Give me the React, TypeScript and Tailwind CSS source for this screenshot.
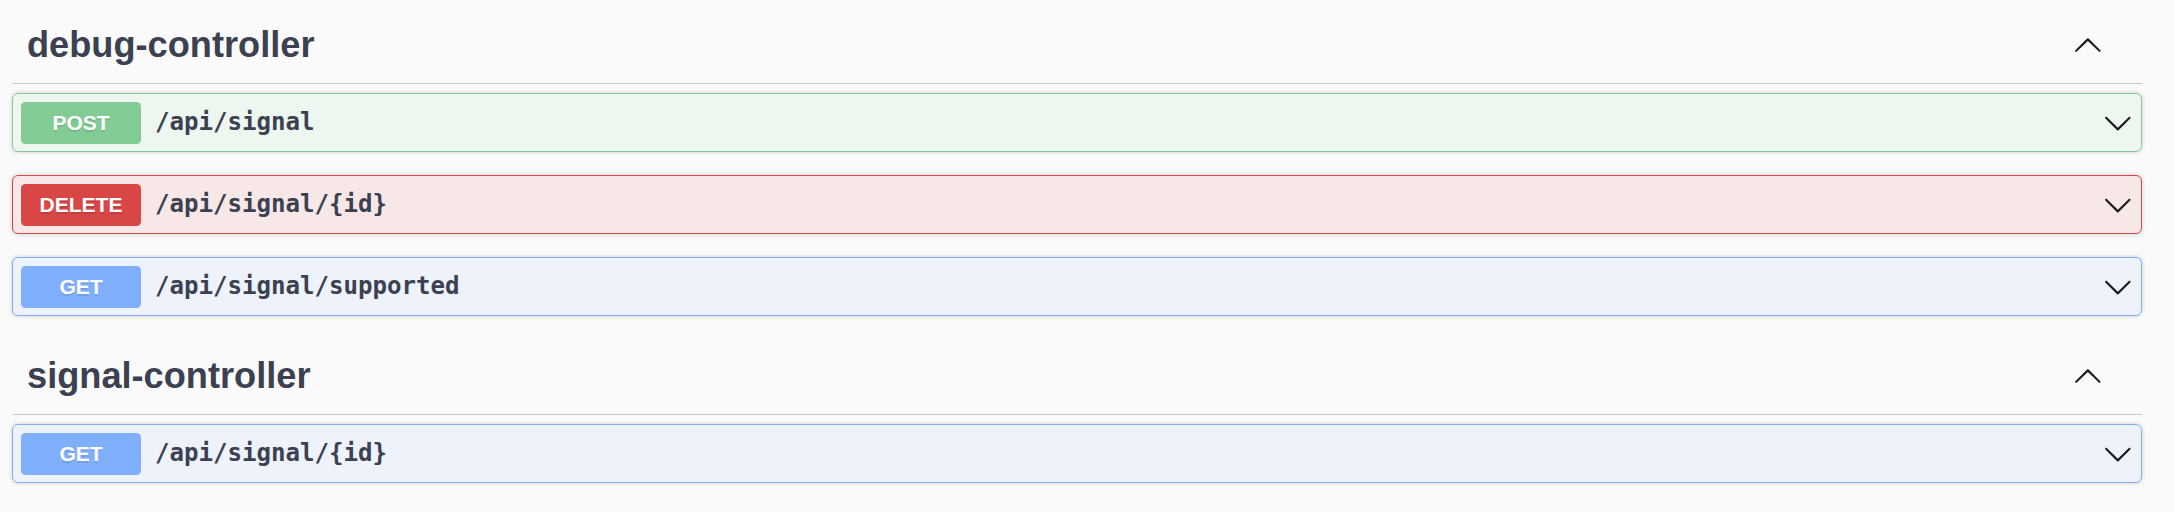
import React from 'react';

type Method = 'POST' | 'DELETE' | 'GET';

interface Operation {
  method: Method;
  path: string;
}

interface TagSection {
  name: string;
  ops: Operation[];
}

const sections: TagSection[] = [
  {
    name: 'debug-controller',
    ops: [
      { method: 'POST', path: '/api/signal' },
      { method: 'DELETE', path: '/api/signal/{id}' },
      { method: 'GET', path: '/api/signal/supported' },
    ],
  },
  {
    name: 'signal-controller',
    ops: [{ method: 'GET', path: '/api/signal/{id}' }],
  },
];

// block + badge colours per http method
const methodStyles: Record<Method, { block: string; badge: string }> = {
  POST: {
    block: 'bg-[#edf6ef] border-[#83cb94]',
    badge: 'bg-[#83cb94]',
  },
  DELETE: {
    block: 'bg-[#f7e8e7] border-[#d84646]',
    badge: 'bg-[#d84646]',
  },
  GET: {
    block: 'bg-[#edf2fb] border-[#80b0fd]',
    badge: 'bg-[#80b0fd]',
  },
};

const Arrow: React.FC<{ up?: boolean }> = ({ up }) => (
  <svg
    viewBox="0 0 20 20"
    className={`w-[29.7px] h-[29.7px] shrink-0 fill-[#1b1b1b] ${up ? 'rotate-180' : ''}`}
    aria-hidden="true"
  >
    <path d="M17.418 6.109c.272-.268.709-.268.979 0s.271.701 0 .969l-7.908 7.83c-.27.268-.707.268-.979 0l-7.908-7.83c-.27-.268-.27-.701 0-.969.271-.268.709-.268.979 0L10 13.25z" />
  </svg>
);

const OperationRow: React.FC<{ op: Operation }> = ({ op }) => {
  const style = methodStyles[op.method];
  return (
    <div
      className={`flex items-center h-[59px] mb-[23px] px-[8px] rounded-[6px] border shadow-[0_0_4.5px_rgba(0,0,0,0.19)] ${style.block}`}
    >
      <span
        className={`flex items-center justify-center w-[120px] h-[42px] rounded-[4.5px] text-white font-bold text-[21px] font-['Liberation_Sans',Arial,sans-serif] [text-shadow:0_1.5px_0_rgba(0,0,0,0.1)] ${style.badge}`}
      >
        {op.method}
      </span>
      <span className="ml-[14px] flex-1 text-[24.1px] font-bold text-[#3b4151] font-['DejaVu_Sans_Mono',monospace]">
        {op.path}
      </span>
      <Arrow />
    </div>
  );
};

const App: React.FC = () => {
  return (
    <div className="w-full h-[512px] bg-[#fafafa] pt-[8px] pl-[12px] pr-[32px] overflow-hidden">
      {sections.map((section) => (
        <div key={section.name}>
          <div className="flex items-center justify-between h-[76px] pl-[15px] pr-[39px] border-b border-[#c9cace]">
            <h3 className="text-[36.2px] font-bold text-[#3b4151] font-['Liberation_Sans',Arial,sans-serif]">
              {section.name}
            </h3>
            <Arrow up />
          </div>
          <div className="mt-[9px]">
            {section.ops.map((op) => (
              <OperationRow key={op.method + op.path} op={op} />
            ))}
          </div>
        </div>
      ))}
    </div>
  );
};

export default App;
